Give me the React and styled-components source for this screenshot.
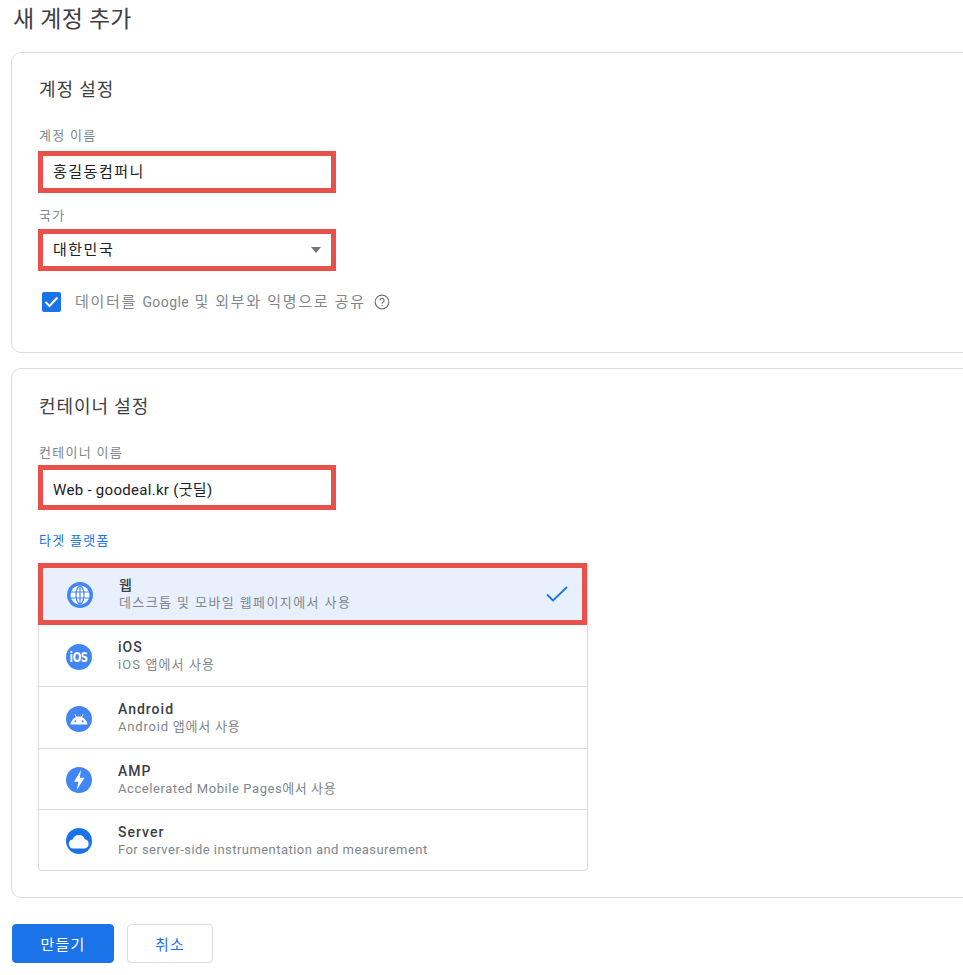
import React from 'react'
import styled, {createGlobalStyle} from 'styled-components'

const BLUE = '#1a73e8'
const ICON_BLUE = '#4285f4'
const RED = '#e8504a'
const LINE = '#dadce0'

const GlobalStyle = createGlobalStyle`
  html, body {
    margin: 0;
    background: #fff;
    overflow: hidden;
  }
  body {
    font-family: Roboto, "Noto Sans CJK KR", sans-serif;
    color: #3c4043;
  }
`

const Page = styled.div`
  width: 963px;
  height: 975px;
  overflow: hidden;
  padding-left: 11px;
  box-sizing: border-box;
`

const Title = styled.h1`
  margin: 0 0 13px 2px;
  height: 39px;
  font-size: 23px;
  line-height: 39px;
  font-weight: 400;
  letter-spacing: 0.2px;
  color: #3c4043;
`

const Card = styled.section`
  width: 1000px;
  box-sizing: border-box;
  border: 1px solid ${LINE};
  border-radius: 10px;
  padding: ${props => props.$top}px 26px ${props => props.$bottom}px;
  margin-bottom: 15px;
`

const CardTitle = styled.h2`
  margin: 0 0 26px 1px;
  font-size: 18px;
  line-height: 24px;
  font-weight: 400;
  letter-spacing: 0.9px;
  color: #3c4043;
`

const FieldLabel = styled.div`
  font-size: 13px;
  line-height: 16px;
  letter-spacing: 1.3px;
  color: #80868b;
  margin: ${props => props.$top || 0}px 0 ${props => props.$bottom}px 1px;
`

const Field = styled.div`
  width: 298px;
  height: ${props => props.$height}px;
  box-sizing: border-box;
  border: 5px solid ${RED};
  display: flex;
  align-items: center;
  justify-content: space-between;
  padding: 0 10px 3px;
  font-size: 15px;
  letter-spacing: 1.5px;
  color: #202124;
`

const TallField = styled(Field)`
  padding: 2px 10px 0;
  letter-spacing: 0.3px;
`

const Arrow = styled.span`
  width: 0;
  height: 0;
  margin-top: 3px;
  border-left: 5px solid transparent;
  border-right: 5px solid transparent;
  border-top: 6px solid #70757a;
`

const CheckRow = styled.div`
  display: flex;
  align-items: center;
  height: 24px;
  margin: 19px 0 0 4px;
  color: #80868b;
`

const CheckBox = styled.span`
  width: 19px;
  height: 20px;
  border-radius: 2px;
  background: ${BLUE};
  margin-right: 14px;
  display: flex;
  align-items: center;
  justify-content: center;
`

const CheckText = styled.span`
  font-size: 15px;
  letter-spacing: 1.7px;
  margin-top: -3px;
  white-space: pre;
`

const Latin = styled.span`
  font-size: 14px;
  letter-spacing: 0.4px;
`

const HelpIcon = styled.svg`
  width: 16px;
  height: 16px;
  margin-left: 8px;
`

const SectionLabel = styled.div`
  margin: 23px 0 14px 1px;
  font-size: 13px;
  line-height: 16px;
  letter-spacing: 1.3px;
  color: ${BLUE};
`

const PlatformList = styled.div`
  width: 550px;
  box-sizing: border-box;
  border: 1px solid ${LINE};
  border-top: 0;
  border-radius: 0 0 4px 4px;
`

const IconCircle = styled.span`
  flex: none;
  width: 26px;
  height: 26px;
  border-radius: 50%;
  background: ${props => props.$dark ? BLUE : ICON_BLUE};
  display: flex;
  align-items: center;
  justify-content: center;
  margin: 2px 26px 0 0;
`

const IosMark = styled.span`
  font-family: "DejaVu Sans", sans-serif;
  font-size: 14px;
  font-weight: 700;
  letter-spacing: -0.5px;
  color: #fff;
  transform: scaleX(0.72);
`

const RowText = styled.div`
  flex: 1;
  display: flex;
  flex-direction: column;
  gap: 1px;
`

const Row = styled.div`
  height: ${props => props.$height}px;
  box-sizing: border-box;
  display: flex;
  align-items: center;
  padding-left: 27px;
  border-bottom: 1px solid ${LINE};

  &:last-child {
    border-bottom: 0;
  }
`

const SelectedRow = styled(Row)`
  margin-left: -1px;
  padding-left: 24px;
  padding-right: 14px;
  width: 549px;
  background: #e8f0fe;
  border: 5px solid ${RED};

  ${RowText} {
    margin-top: -2px;
  }
`

const RowName = styled.div`
  font-size: 14px;
  line-height: 18px;
  font-weight: 500;
  letter-spacing: 1px;
  color: #3c4043;
`

const RowSub = styled.div`
  font-size: 13px;
  line-height: 16px;
  letter-spacing: ${props => props.$spacing}px;
  color: #80868b;
`

const Actions = styled.div`
  display: flex;
  gap: 13px;
  margin-top: 26px;
  margin-left: 1px;
`

const Button = styled.button`
  height: 39px;
  width: ${props => props.$width}px;
  box-sizing: border-box;
  border-radius: 4px;
  font-family: inherit;
  font-size: 15px;
  letter-spacing: 1.2px;
  border: 1px solid ${props => props.$primary ? BLUE : LINE};
  background: ${props => props.$primary ? BLUE : '#fff'};
  color: ${props => props.$primary ? '#fff' : BLUE};
`

const GlobeIcon = () => (
  <svg width="20" height="20" viewBox="0 0 20 20">
    <circle cx="10" cy="10" r="9.500" fill="#fff" />
    <g fill="none" stroke={ICON_BLUE} strokeWidth="1.200">
      <ellipse cx="10" cy="10" rx="4" ry="9" />
      <path d="M1 7h18M1 13h18M10 1v18" />
    </g>
  </svg>
)

const AndroidIcon = () => (
  <svg width="20" height="14" viewBox="0 0 20 14" fill="#fff">
    <path d="M1.500 12.500C1.900 8.800 4 6.200 7 5.200L5.400 2.400l.8-.5 1.600 2.800c1.400-.4 3-.4 4.400 0l1.600-2.800.8.5L13 5.200c3 1 5.100 3.600 5.500 7.300z" />
    <circle cx="6.400" cy="9.200" r="1" fill={ICON_BLUE} />
    <circle cx="13.600" cy="9.200" r="1" fill={ICON_BLUE} />
  </svg>
)

const BoltIcon = () => (
  <svg width="16" height="22" viewBox="0 0 14 20" fill="#fff">
    <path d="M8.800 1 2.500 11.500h4L5 19 12 8H7.700z" />
  </svg>
)

const CloudIcon = () => (
  <svg width="22" height="15" viewBox="0 0 22 15" fill="#fff">
    <path d="M5.300 14.500a4.500 4.500 0 0 1-.6-8.950A6.400 6.400 0 0 1 16.800 5.300 4.700 4.700 0 0 1 17 14.500z" />
  </svg>
)

const platforms = [
  {name: 'iOS', sub: 'iOS 앱에서 사용', spacing: 1.1, height: 62, icon: <IosMark>iOS</IosMark>},
  {name: 'Android', sub: 'Android 앱에서 사용', spacing: 0.8, height: 62, icon: <AndroidIcon />},
  {name: 'AMP', sub: 'Accelerated Mobile Pages에서 사용', spacing: 0.57, height: 61, icon: <BoltIcon />},
  {name: 'Server', sub: 'For server-side instrumentation and measurement', spacing: 0.45, height: 60, icon: <CloudIcon />, dark: true}
]

export default function App() {
  return (
    <Page>
      <GlobalStyle />
      <Title>새 계정 추가</Title>

      <Card $top={25} $bottom={38}>
        <CardTitle>계정 설정</CardTitle>
        <FieldLabel $bottom={7}>계정 이름</FieldLabel>
        <Field $height={42}>홍길동컴퍼니</Field>
        <FieldLabel $top={15} $bottom={5}>국가</FieldLabel>
        <Field $height={42}>
          대한민국
          <Arrow />
        </Field>
        <CheckRow>
          <CheckBox>
            <svg width="15" height="12" viewBox="0 0 15 12" fill="none" stroke="#fff" strokeWidth="2">
              <path d="M1.500 6l4 4 8-8.500" />
            </svg>
          </CheckBox>
          <CheckText>데이터를 <Latin>Google</Latin> 및 외부와 익명으로 공유</CheckText>
          <HelpIcon viewBox="0 0 16 16" fill="none" stroke="#70757a" strokeWidth="1.200">
            <circle cx="8" cy="8" r="6.800" />
            <path d="M5.900 6.400a2.100 2.100 0 1 1 3.300 1.700c-.8.500-1.200.9-1.200 1.700" />
            <path d="M8 11v1.200" />
          </HelpIcon>
        </CheckRow>
      </Card>

      <Card $top={26} $bottom={26}>
        <CardTitle>컨테이너 설정</CardTitle>
        <FieldLabel $bottom={4}>컨테이너 이름</FieldLabel>
        <TallField $height={45}>Web - goodeal.kr (굿딜)</TallField>
        <SectionLabel>타겟 플랫폼</SectionLabel>
        <PlatformList>
          <SelectedRow $height={62}>
            <IconCircle>
              <GlobeIcon />
            </IconCircle>
            <RowText>
              <RowName>웹</RowName>
              <RowSub $spacing={1.4}>데스크톱 및 모바일 웹페이지에서 사용</RowSub>
            </RowText>
            <svg width="22" height="18" viewBox="0 0 22 18" fill="none" stroke={BLUE} strokeWidth="1.800">
              <path d="M1 9.500l6 6L21 2" />
            </svg>
          </SelectedRow>
          {platforms.map(item => (
            <Row key={item.name} $height={item.height}>
              <IconCircle $dark={item.dark}>{item.icon}</IconCircle>
              <RowText>
                <RowName>{item.name}</RowName>
                <RowSub $spacing={item.spacing}>{item.sub}</RowSub>
              </RowText>
            </Row>
          ))}
        </PlatformList>
      </Card>

      <Actions>
        <Button $primary $width={102}>만들기</Button>
        <Button $width={86}>취소</Button>
      </Actions>
    </Page>
  )
}
